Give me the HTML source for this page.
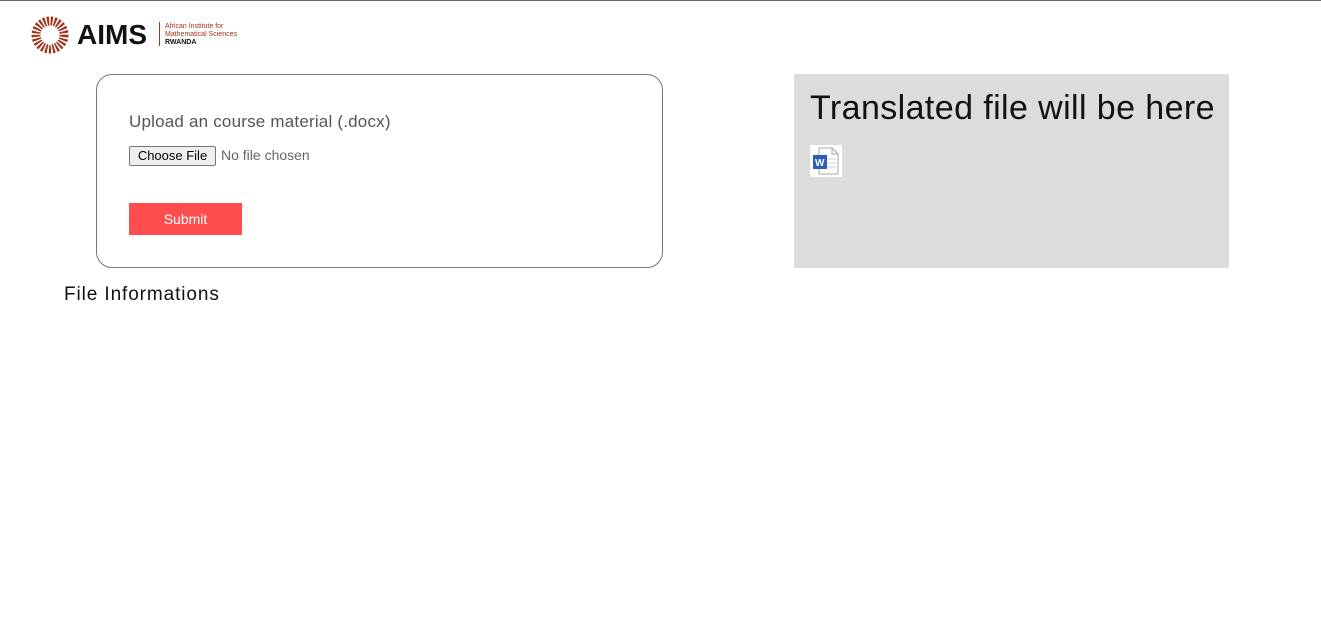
<!DOCTYPE html>
<html><head><style>
body{margin:0;width:1321px;height:636px;background:#fff;font-family:"Liberation Sans",sans-serif;position:relative;overflow:hidden}
.top{position:absolute;top:0;left:0;width:1321px;height:1px;background:#5d6a72}
.card{position:absolute;left:96px;top:74px;width:565px;height:192px;border:1px solid #777;border-radius:16px}
.lbl{position:absolute;left:129px;top:112px;font-size:17px;color:#555;letter-spacing:0.2px}
.btn{position:absolute;left:129px;top:146px;width:85px;height:18px;border:1px solid #767676;border-radius:2px;background:#efefef;font-size:13px;text-align:center;line-height:18px;color:#000}
.nf{position:absolute;left:221px;top:147px;font-size:14px;color:#666}
.sub{position:absolute;left:129px;top:203px;width:113px;height:32px;background:#ff4d4d;color:#fff;font-size:14px;text-align:center;line-height:32px}
.fi{position:absolute;left:64px;top:284px;font-size:19px;color:#111;letter-spacing:0.9px}
.panel{position:absolute;left:794px;top:74px;width:435px;height:194px;background:#dcdcdc}
.pt{position:absolute;left:16px;top:15px;font-size:34px;color:#111;white-space:nowrap;letter-spacing:0.4px}
</style></head><body>
<div class="top"></div>
<svg style="position:absolute;left:31px;top:16px" width="40" height="38" viewBox="0 0 40 38">
<g stroke="#a0321e" stroke-width="2.2">
<circle cx="19" cy="19" r="14" fill="none" stroke-dasharray="2 1.5" stroke-width="9"/>
</g>
<path d="M14 13 L22 12 L26 17 L23 24 L19 30 L16 22 L12 18Z" fill="#fff"/>
</svg>
<div style="position:absolute;left:77px;top:19px;font-size:28px;font-weight:bold;color:#111;letter-spacing:0px">AIMS</div>
<div style="position:absolute;left:159px;top:22px;width:1px;height:24px;background:#a0321e"></div>
<div style="position:absolute;left:165px;top:23px;font-size:7px;line-height:8px;color:#a0321e">African Institute for<br>Mathematical Sciences<br><b style="color:#111">RWANDA</b></div>
<div class="card"></div>
<div class="lbl">Upload an course material (.docx)</div>
<div class="btn">Choose File</div>
<div class="nf">No file chosen</div>
<div class="sub">Submit</div>
<div class="fi">File Informations</div>
<div class="panel"><div class="pt">Translated file will be here</div>
<svg style="position:absolute;left:16px;top:71px" width="32" height="32" viewBox="0 0 32 32">
<rect width="32" height="32" fill="#fff"/>
<path d="M9 3H22L28 9V29H9Z" fill="#fff" stroke="#aaa"/>
<path d="M22 3V9H28" fill="none" stroke="#aaa"/>
<g stroke="#ccc"><line x1="14" y1="14" x2="26" y2="14"/><line x1="14" y1="18" x2="26" y2="18"/><line x1="14" y1="22" x2="26" y2="22"/></g>
<rect x="3" y="10" width="14" height="14" fill="#2b5fb8"/>
<text x="5" y="21" font-size="10" font-weight="bold" fill="#fff" font-family="Liberation Sans">W</text>
</svg></div>
</body></html>
